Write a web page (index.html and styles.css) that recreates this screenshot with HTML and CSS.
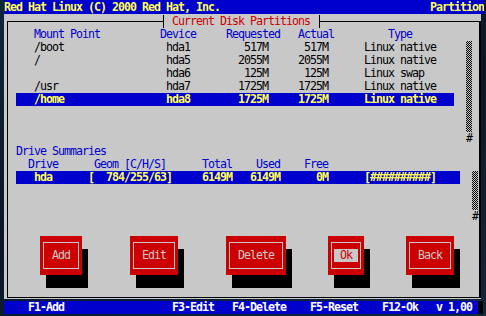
FILE: index.html
```html
<!DOCTYPE html>
<html lang="en">

<head>
    <meta charset="UTF-8">
    <meta name="viewport" content="width=device-width, initial-scale=1.0">
    <title>Disk Druid</title>
    <link rel="stylesheet" href="styles.css">
</head>

<body>
    <div class="screen">
        <div class="topbar">Red Hat Linux (C) 2000 Red Hat, Inc.                                   Partition</div>

        <div class="window">
            <fieldset class="frame">
                <legend>Current Disk Partitions</legend>

                <div class="label">    Mount Point          Device     Requested   Actual         Type</div>
                <div class="list">
                    <div class="rows parts">
                        <div class="item">   /boot                 hda1         517M      517M      Linux native</div>
                        <div class="item">   /                     hda5        2055M     2055M      Linux native</div>
                        <div class="item">                         hda6         125M      125M      Linux swap</div>
                        <div class="item">   /usr                  hda7        1725M     1725M      Linux native</div>
                        <div class="item sel">   /home                 hda8        1725M     1725M      Linux native</div>
                    </div>
                    <div class="scroll">
                        <div class="track long"></div>
                        <div class="thumb">#</div>
                    </div>
                </div>

                <div class="label"> Drive Summaries</div>
                <div class="label">   Drive      Geom [C/H/S]      Total    Used    Free</div>
                <div class="list">
                    <div class="rows drives">
                        <div class="item sel">   hda      [  784/255/63]     6149M   6149M      0M      [##########]</div>
                    </div>
                    <div class="scroll">
                        <div class="track short"></div>
                        <div class="thumb">#</div>
                    </div>
                </div>

                <div class="buttons">
                    <div class="btn add"><span class="in"><span>Add</span></span></div>
                    <div class="btn edit"><span class="in"><span>Edit</span></span></div>
                    <div class="btn del"><span class="in"><span>Delete</span></span></div>
                    <div class="btn ok"><span class="in"><span class="focus"> Ok </span></span></div>
                    <div class="btn back"><span class="in"><span>Back</span></span></div>
                </div>
            </fieldset>
        </div>

        <div class="helpbar">
            <div class="help">    F1-Add                  F3-Edit   F4-Delete    F5-Reset    F12-Ok   v 1,00</div>
            <div class="help-end"></div>
        </div>
    </div>
</body>

</html>
```

FILE: styles.css
```css
body {
    margin: 0;
    width: 486px;
    height: 316px;
    overflow: hidden;
    background: #0c1a2c;
    background-image: linear-gradient(160deg, #10263a 0%, #0a1626 50%, #12283c 100%);
    font-family: "DejaVu Sans Mono", "Liberation Mono", monospace;
    font-size: 11.63px;
    letter-spacing: -1px;
    line-height: 13px;
}

.screen {
    margin-left: 4px;
    width: 480px;
}

/* every line of the text screen keeps its spaces */
.topbar,
.label,
.item,
.thumb,
.btn span,
.help {
    white-space: pre;
}

.topbar {
    width: 480px;
    height: 13px;
    padding-top: 1px;
    overflow: hidden;
    background: #0000cc;
    color: #ffff55;
    font-weight: bold;
}

.window {
    width: 477px;
    padding: 1px 0 1px 3px;
    box-sizing: border-box;
    background: #c8c8c8;
}

.frame {
    margin: 0;
    min-width: 0;
    padding: 0 0 22px 2px;
    border: 1px solid #000;
    border-right-width: 2px;
}

.frame legend {
    margin-left: 153px;
    padding: 0 9px 0 8px;
    height: 13px;
    border-left: 1px solid #000;
    border-right: 1px solid #000;
    color: #cc0000;
    white-space: pre;
}

.label {
    color: #0000cc;
    height: 13px;
}

.list {
    display: flex;
    align-items: flex-start;
}

.parts {
    width: 456px;
}

.drives {
    width: 462px;
}

.item {
    margin-left: 6px;
    height: 13px;
    color: #000;
}

.parts .item {
    width: 438px;
}

.drives .item {
    width: 444px;
}

.item.sel {
    background: #0000cc;
    color: #ffff55;
    font-weight: bold;
}

.scroll {
    width: 6px;
}

.track {
    background: repeating-conic-gradient(#000 0 25%, #c8c8c8 0 50%) 0 0 / 2px 2px;
}

.track.long {
    height: 91px;
}

.track.short {
    height: 39px;
}

.thumb {
    height: 13px;
    color: #000;
}

/* push buttons with their drop shadow */
.buttons {
    display: flex;
    gap: 42px;
    margin-top: 13px;
    padding-left: 30px;
}

.btn {
    display: flex;
    height: 39px;
    padding: 6px 3px;
    box-sizing: border-box;
    background: #cc0000;
    box-shadow: 6px 13px 0 #000;
    color: #c8c8c8;
}

.btn .in {
    flex: 1;
    display: flex;
    align-items: center;
    justify-content: center;
    border: 1px solid #c8c8c8;
}

.add {
    width: 42px;
    margin-right: 6px;
}

.edit {
    width: 48px;
    margin-right: 6px;
}

.del {
    width: 60px;
}

.ok {
    width: 36px;
}

.back {
    width: 48px;
}

.focus {
    background: #c8c8c8;
    color: #cc0000;
}

.helpbar {
    display: flex;
    margin-top: 2px;
}

.help {
    width: 474px;
    height: 13px;
    background: #0000cc;
    color: #fff;
    font-weight: bold;
}

.help-end {
    width: 5px;
    height: 13px;
    background: #000;
}
```
